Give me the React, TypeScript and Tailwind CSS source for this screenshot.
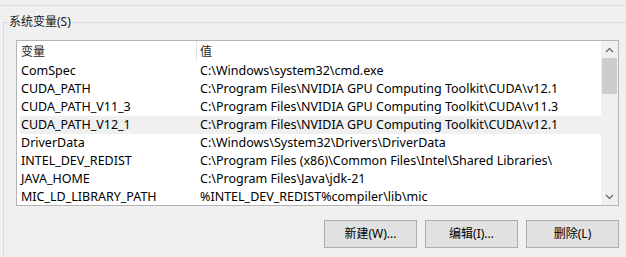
import React from "react";

const rows: [string, string][] = [
  ["ComSpec", "C:\\Windows\\system32\\cmd.exe"],
  ["CUDA_PATH", "C:\\Program Files\\NVIDIA GPU Computing Toolkit\\CUDA\\v12.1"],
  ["CUDA_PATH_V11_3", "C:\\Program Files\\NVIDIA GPU Computing Toolkit\\CUDA\\v11.3"],
  ["CUDA_PATH_V12_1", "C:\\Program Files\\NVIDIA GPU Computing Toolkit\\CUDA\\v12.1"],
  ["DriverData", "C:\\Windows\\System32\\Drivers\\DriverData"],
  ["INTEL_DEV_REDIST", "C:\\Program Files (x86)\\Common Files\\Intel\\Shared Libraries\\"],
  ["JAVA_HOME", "C:\\Program Files\\Java\\jdk-21"],
  ["MIC_LD_LIBRARY_PATH", "%INTEL_DEV_REDIST%compiler\\lib\\mic"],
];

const font = {
  fontFamily: '"Noto Sans", "Noto Sans CJK SC", sans-serif',
};

function Chevron({ up }: { up: boolean }) {
  return (
    <svg width="9" height="6" viewBox="0 0 9 6">
      <path
        d={up ? "M1 5 L4.5 1.5 L8 5" : "M1 1 L4.5 4.5 L8 1"}
        fill="none"
        stroke="#606060"
        strokeWidth="1.2"
      />
    </svg>
  );
}

export default function App() {
  return (
    <div
      className="relative w-[626px] h-[257px] overflow-hidden bg-[#f0f0f0] text-[12px] text-black"
      style={font}
    >
      <div className="h-[6px] border-b border-[#dcdcdc]" />
      <div className="relative ml-[3px] mt-[16px] w-[623px] h-[240px] border-l border-t border-[#dcdcdc] pl-[12px] pt-[17px] pr-[7px]">
        <div className="absolute left-[4px] top-[-9px] bg-[#f0f0f0] px-[1px] leading-[16px] text-[#1a1a1a]">
          系统变量(S)
        </div>
        <div className="flex h-[166px] border border-[#b4b4b4] bg-white">
          <div className="flex-1 flex flex-col overflow-hidden">
            <div className="flex h-[21px] items-center shrink-0">
              <div className="w-[179px] pl-[4px] text-[#1e1e1e]">变量</div>
              <div className="w-px h-full bg-[#e5e5e5]" />
              <div className="pl-[3px] text-[#1e1e1e]">值</div>
            </div>
            {rows.map(([k, v], i) => (
              <div
                key={k}
                className={`flex h-[18px] shrink-0 items-center ml-[3px] whitespace-nowrap text-[12.5px] leading-[18px] ${
                  i === 3 ? "bg-[#f0f0f0]" : ""
                }`}
              >
                <div className="w-[180px] shrink-0 pl-[1px]">{k}</div>
                <div>{v}</div>
              </div>
            ))}
          </div>
          <div className="w-[17px] flex flex-col bg-[#f0f0f0]">
            <div className="h-[17px] flex items-center justify-center">
              <Chevron up />
            </div>
            <div className="mx-[1px] h-[36px] bg-[#cdcdcd]" />
            <div className="flex-1" />
            <div className="h-[17px] flex items-center justify-center">
              <Chevron up={false} />
            </div>
          </div>
        </div>
        <div className="flex justify-end gap-[8px] mt-[14px]">
          {["新建(W)...", "编辑(I)...", "删除(L)"].map((t) => (
            <div
              key={t}
              className="w-[93px] h-[28px] flex items-center justify-center bg-[#e1e1e1] border border-[#adadad]"
            >
              {t}
            </div>
          ))}
        </div>
      </div>
    </div>
  );
}
